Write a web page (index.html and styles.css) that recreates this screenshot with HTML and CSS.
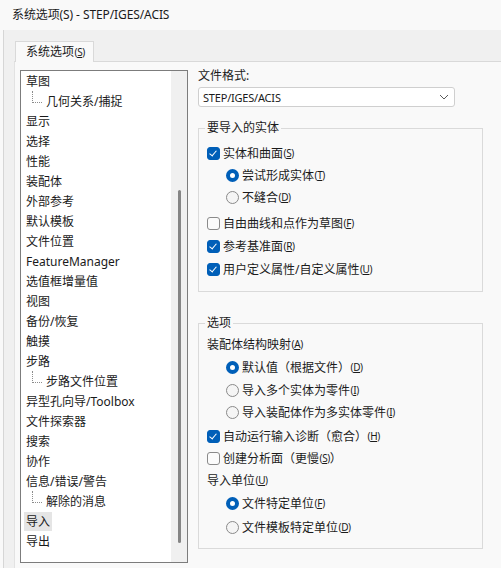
FILE: index.html
```html
<!DOCTYPE html>
<html lang="zh-CN">
<head>
<meta charset="utf-8">
<title>系统选项(S) - STEP/IGES/ACIS</title>
<link rel="stylesheet" href="styles.css">
</head>
<body>
<div class="titlebar">系统选项(S) - STEP/IGES/ACIS</div>
<div class="frame">
  <div class="tabs">
    <div class="tab">系统选项<span class="acc">(<u>S</u>)</span></div>
  </div>
  <div class="panel">
    <div class="tree">
      <div class="tree-list">
        <div class="node"><span class="lbl">草图</span></div>
        <div class="node child"><span class="conn"></span><span class="lbl">几何关系/捕捉</span></div>
        <div class="node"><span class="lbl">显示</span></div>
        <div class="node"><span class="lbl">选择</span></div>
        <div class="node"><span class="lbl">性能</span></div>
        <div class="node"><span class="lbl">装配体</span></div>
        <div class="node"><span class="lbl">外部参考</span></div>
        <div class="node"><span class="lbl">默认模板</span></div>
        <div class="node"><span class="lbl">文件位置</span></div>
        <div class="node"><span class="lbl">FeatureManager</span></div>
        <div class="node"><span class="lbl">选值框增量值</span></div>
        <div class="node"><span class="lbl">视图</span></div>
        <div class="node"><span class="lbl">备份/恢复</span></div>
        <div class="node"><span class="lbl">触摸</span></div>
        <div class="node"><span class="lbl">步路</span></div>
        <div class="node child"><span class="conn"></span><span class="lbl">步路文件位置</span></div>
        <div class="node"><span class="lbl">异型孔向导/Toolbox</span></div>
        <div class="node"><span class="lbl">文件探索器</span></div>
        <div class="node"><span class="lbl">搜索</span></div>
        <div class="node"><span class="lbl">协作</span></div>
        <div class="node"><span class="lbl">信息/错误/警告</span></div>
        <div class="node child"><span class="conn"></span><span class="lbl">解除的消息</span></div>
        <div class="node"><span class="lbl selected">导入</span></div>
        <div class="node"><span class="lbl">导出</span></div>
      </div>
      <div class="scrollbar"><div class="thumb"></div></div>
    </div>

    <div class="content">
      <div class="field-label">文件格式:</div>
      <div class="select">
        <span class="select-text">STEP/IGES/ACIS</span>
        <svg class="chevron" width="10" height="6" viewBox="0 0 10 6"><path d="M1 1 L5 5 L9 1" fill="none" stroke="#5a5a5a" stroke-width="1"/></svg>
      </div>

      <fieldset class="group group-entities">
        <legend>要导入的实体</legend>
        <div class="row"><span class="check on"></span>实体和曲面<span class="acc">(<u>S</u>)</span></div>
        <div class="row indent"><span class="radio on"></span>尝试形成实体<span class="acc">(<u>T</u>)</span></div>
        <div class="row indent"><span class="radio"></span>不缝合<span class="acc">(<u>D</u>)</span></div>
        <div class="row mt4"><span class="check"></span>自由曲线和点作为草图<span class="acc">(<u>F</u>)</span></div>
        <div class="row mt1"><span class="check on"></span>参考基准面<span class="acc">(<u>R</u>)</span></div>
        <div class="row mt1"><span class="check on"></span>用户定义属性/自定义属性<span class="acc">(<u>U</u>)</span></div>
      </fieldset>

      <fieldset class="group group-options">
        <legend>选项</legend>
        <div class="row">装配体结构映射<span class="acc">(<u>A</u>)</span></div>
        <div class="row indent mt1"><span class="radio on"></span>默认值（根据文件）<span class="acc">(<u>D</u>)</span></div>
        <div class="row indent mt1"><span class="radio"></span>导入多个实体为零件<span class="acc">(<u>I</u>)</span></div>
        <div class="row indent"><span class="radio"></span>导入装配体作为多实体零件<span class="acc">(<u>I</u>)</span></div>
        <div class="row mt2"><span class="check on"></span>自动运行输入诊断（愈合）<span class="acc">(<u>H</u>)</span></div>
        <div class="row"><span class="check"></span>创建分析面（更慢<span class="acc">(<u>S</u>)</span>）</div>
        <div class="row">导入单位<span class="acc">(<u>U</u>)</span></div>
        <div class="row indent mt1"><span class="radio on"></span>文件特定单位<span class="acc">(<u>F</u>)</span></div>
        <div class="row indent mt2"><span class="radio"></span>文件模板特定单位<span class="acc">(<u>D</u>)</span></div>
      </fieldset>
    </div>
  </div>
</div>
</body>
</html>
```

FILE: styles.css
```css
html, body {
  margin: 0;
  padding: 0;
}
body {
  width: 501px;
  height: 568px;
  overflow: hidden;
  background: #f9f9f9;
  font-family: "Noto Sans", "Noto Sans CJK SC", sans-serif;
  font-size: 12px;
  color: #1b1b1b;
}
.titlebar {
  height: 30px;
  line-height: 30px;
  padding-left: 12px;
  font-size: 12px;
  color: #1b1b1b;
  letter-spacing: -0.1px;
}
.frame {
  margin-left: 3px;
  border-left: 1px solid #d6d6d6;
  background: #f0f0f0;
  height: 538px;
  display: flex;
  flex-direction: column;
}
.tabs {
  display: flex;
  padding: 11px 0 0 11px;
  position: relative;
  z-index: 1;
}
.tab {
  height: 20px;
  line-height: 20px;
  width: 67px;
  padding-left: 10px;
  border: 1px solid #d9d9d9;
  border-bottom: none;
  background: #f9f9f9;
  margin-bottom: -1px;
}
.panel {
  flex: 1;
  margin-left: 10px;
  border-top: 1px solid #d9d9d9;
  border-left: 1px solid #e2e2e2;
  background: #f9f9f9;
  display: flex;
  align-items: flex-start;
  padding: 6px 0 0 5px;
}
.tree {
  margin-top: 2px;
  width: 166px;
  height: 491px;
  border: 1px solid #7c7c7c;
  background: #ffffff;
  display: flex;
  flex: none;
}
.tree-list {
  width: 150px;
  display: flex;
  flex-direction: column;
}
.node {
  height: 20px;
  line-height: 20px;
  padding-left: 3px;
  display: flex;
  align-items: center;
  white-space: nowrap;
  color: #1a1a1a;
}
.lbl {
  padding: 0 2px;
  line-height: 19px;
}
.lbl.selected {
  background: #e5e5e5;
}
.node.child {
  padding-left: 11px;
}
.conn {
  align-self: stretch;
  width: 9px;
  height: 11px;
  border-left: 1px dotted #8c8c8c;
  border-bottom: 1px dotted #8c8c8c;
  margin-right: 2px;
  flex: none;
}
.scrollbar {
  width: 16px;
  background: #f0f0f0;
  display: flex;
  justify-content: center;
  padding-top: 119px;
}
.thumb {
  width: 3px;
  height: 353px;
  border-radius: 2px;
  background: #858585;
}
.content {
  margin-left: 10px;
  width: 285px;
  display: flex;
  flex-direction: column;
}
.field-label {
  height: 16px;
  line-height: 16px;
}
.select {
  box-sizing: border-box;
  margin-top: 3px;
  width: 257px;
  height: 20px;
  border: 1px solid #cfcfcf;
  border-radius: 3px;
  background: #ffffff;
  display: flex;
  align-items: center;
  justify-content: space-between;
  padding: 0 5px 0 4px;
}
.select-text {
  font-size: 11px;
  letter-spacing: -0.2px;
  color: #1a1a1a;
}
.chevron {
  display: block;
}
.group {
  margin: 13px 0 0 0;
  padding: 6px 8px 11px 8px;
  border: 1px solid #dadada;
  min-width: 0;
  display: flex;
  flex-direction: column;
}
.group-options {
  margin-top: 23px;
  padding-top: 2px;
  padding-bottom: 10px;
}
legend {
  padding: 0 2px;
  margin-left: -2px;
  line-height: 16px;
  height: 16px;
}
.row {
  height: 22px;
  display: flex;
  align-items: center;
  white-space: nowrap;
}
.row.indent {
  padding-left: 19px;
}
.mt1 { margin-top: 1px; }
.mt2 { margin-top: 2px; }
.mt4 { margin-top: 4px; }
.acc {
  font-size: 10px;
  letter-spacing: -0.4px;
  margin-left: 0.5px;
}
.acc u {
  text-decoration-thickness: 1px;
  text-underline-offset: 1px;
}
.check {
  width: 11px;
  height: 11px;
  border: 1px solid #8a8a8a;
  border-radius: 3px;
  background: #fbfbfb;
  margin-right: 3px;
  flex: none;
  position: relative;
}
.check.on {
  background: #005fb8;
  border-color: #005fb8;
}
.check.on::after {
  content: "";
  position: absolute;
  left: 3px;
  top: 1px;
  width: 3px;
  height: 6px;
  border-right: 1.3px solid #ffffff;
  border-bottom: 1.3px solid #ffffff;
  transform: rotate(40deg);
}
.radio {
  width: 11px;
  height: 11px;
  border: 1px solid #8a8a8a;
  border-radius: 50%;
  background: #f5f5f5;
  margin-right: 3px;
  flex: none;
  box-sizing: content-box;
}
.radio.on {
  width: 5px;
  height: 5px;
  border: 4px solid #005fb8;
  background: #ffffff;
}
```
